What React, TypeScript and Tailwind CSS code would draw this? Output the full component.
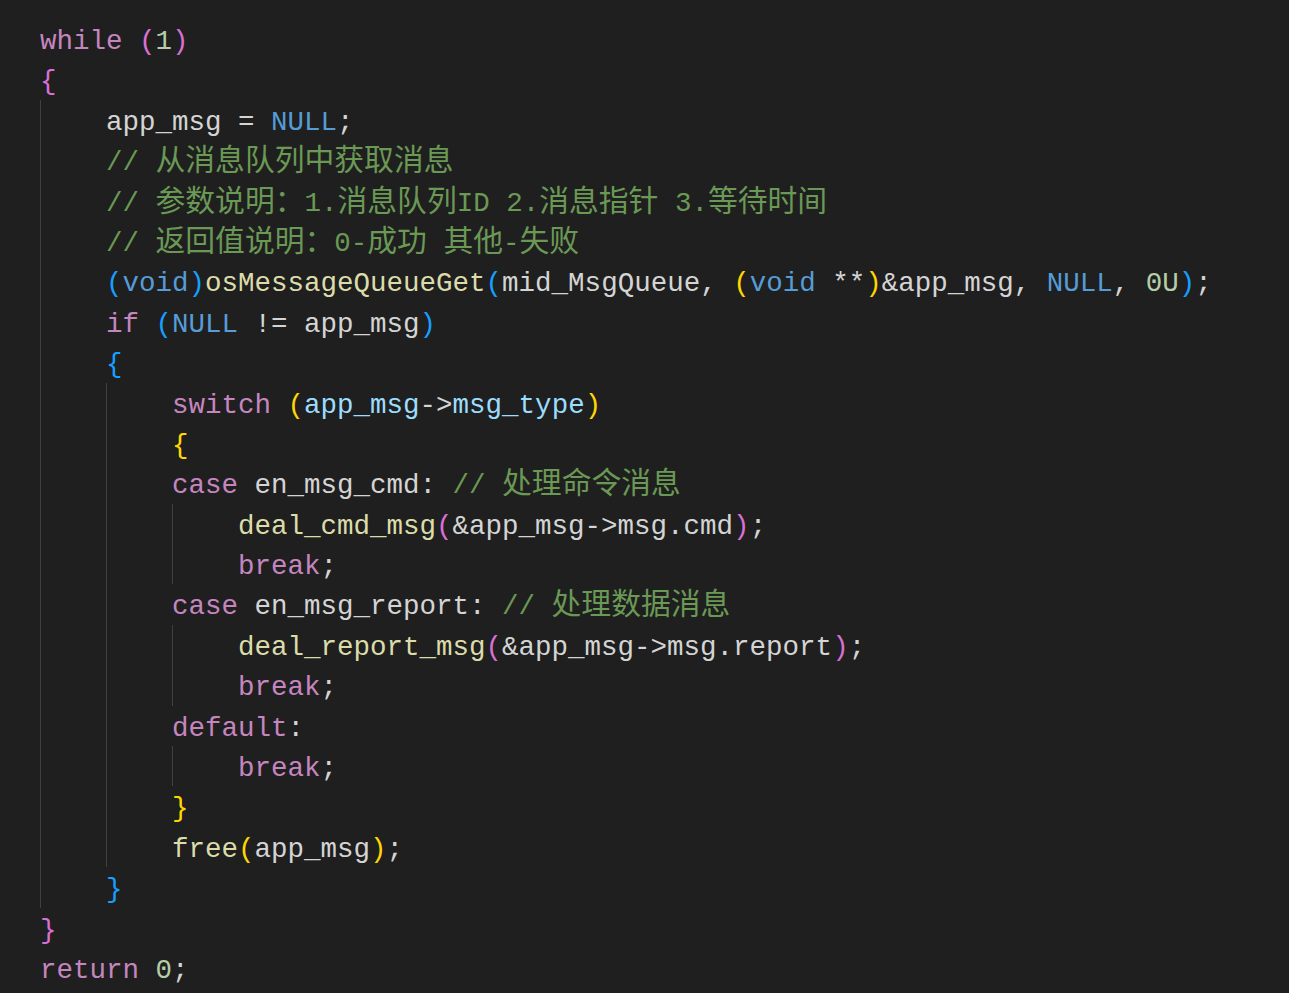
import type { ReactNode } from "react";

// token colours (VS Code Dark Modern + bracket pair colours)
const kw = "text-[#c586c0]";
const fn = "text-[#dcdcaa]";
const bl = "text-[#569cd6]";
const nu = "text-[#b5cea8]";
const vr = "text-[#9cdcfe]";
const cm = "text-[#6a9955]";
const gold = "text-[#ffd700]";
const pink = "text-[#da70d6]";
const blue = "text-[#179fff]";

function T({ c, children }: { c: string; children: ReactNode }) {
  return <span className={c}>{children}</span>;
}

// comments mix latin and CJK; CJK glyphs are wider in the editor
function Cm({ t }: { t: string }) {
  const parts = t.split(/([\u3000-\u9fff\uff00-\uffef]+)/);
  return (
    <span className={cm}>
      {parts.map((p, i) =>
        i % 2 ? (
          <span key={i} className="text-[29.8px] leading-none font-['Noto_Sans_CJK_SC',sans-serif]">
            {p}
          </span>
        ) : (
          p
        )
      )}
    </span>
  );
}

function L({ children }: { children?: ReactNode }) {
  return <div className="h-[40.4px] pt-[3px] whitespace-pre">{children}</div>;
}

function Block({ children }: { children: ReactNode }) {
  return <div className="border-l border-[#404040] pl-[65px]">{children}</div>;
}

export default function App() {
  return (
    <div className="min-h-screen bg-[#1f1f1f] pt-[19px] pl-[40px] text-[#d4d4d4] text-[27.5px] leading-[40.4px] font-['Liberation_Mono','Noto_Sans_CJK_SC',monospace]">
      <L>
        <T c={kw}>while</T> <T c={pink}>(</T><T c={nu}>1</T><T c={pink}>)</T>
      </L>
      <L>
        <T c={pink}>{"{"}</T>
      </L>
      <Block>
        <L>
          app_msg = <T c={bl}>NULL</T>;
        </L>
        <L>
          <Cm t="// 从消息队列中获取消息" />
        </L>
        <L>
          <Cm t="// 参数说明：1.消息队列ID 2.消息指针 3.等待时间" />
        </L>
        <L>
          <Cm t="// 返回值说明：0-成功 其他-失败" />
        </L>
        <L>
          <T c={blue}>(</T><T c={bl}>void</T><T c={blue}>)</T>
          <T c={fn}>osMessageQueueGet</T><T c={blue}>(</T>mid_MsgQueue, <T c={gold}>(</T>
          <T c={bl}>void</T> **<T c={gold}>)</T>&app_msg, <T c={bl}>NULL</T>, <T c={nu}>0U</T>
          <T c={blue}>)</T>;
        </L>
        <L>
          <T c={kw}>if</T> <T c={blue}>(</T><T c={bl}>NULL</T> != app_msg<T c={blue}>)</T>
        </L>
        <L>
          <T c={blue}>{"{"}</T>
        </L>
        <Block>
          <L>
            <T c={kw}>switch</T> <T c={gold}>(</T><T c={vr}>app_msg</T>-&gt;<T c={vr}>msg_type</T>
            <T c={gold}>)</T>
          </L>
          <L>
            <T c={gold}>{"{"}</T>
          </L>
          <L>
            <T c={kw}>case</T> en_msg_cmd: <Cm t="// 处理命令消息" />
          </L>
          <Block>
            <L>
              <T c={fn}>deal_cmd_msg</T><T c={pink}>(</T>&app_msg-&gt;msg.cmd<T c={pink}>)</T>;
            </L>
            <L>
              <T c={kw}>break</T>;
            </L>
          </Block>
          <L>
            <T c={kw}>case</T> en_msg_report: <Cm t="// 处理数据消息" />
          </L>
          <Block>
            <L>
              <T c={fn}>deal_report_msg</T><T c={pink}>(</T>&app_msg-&gt;msg.report<T c={pink}>)</T>;
            </L>
            <L>
              <T c={kw}>break</T>;
            </L>
          </Block>
          <L>
            <T c={kw}>default</T>:
          </L>
          <Block>
            <L>
              <T c={kw}>break</T>;
            </L>
          </Block>
          <L>
            <T c={gold}>{"}"}</T>
          </L>
          <L>
            <T c={fn}>free</T><T c={gold}>(</T>app_msg<T c={gold}>)</T>;
          </L>
        </Block>
        <L>
          <T c={blue}>{"}"}</T>
        </L>
      </Block>
      <L>
        <T c={pink}>{"}"}</T>
      </L>
      <L>
        <T c={kw}>return</T> <T c={nu}>0</T>;
      </L>
    </div>
  );
}
